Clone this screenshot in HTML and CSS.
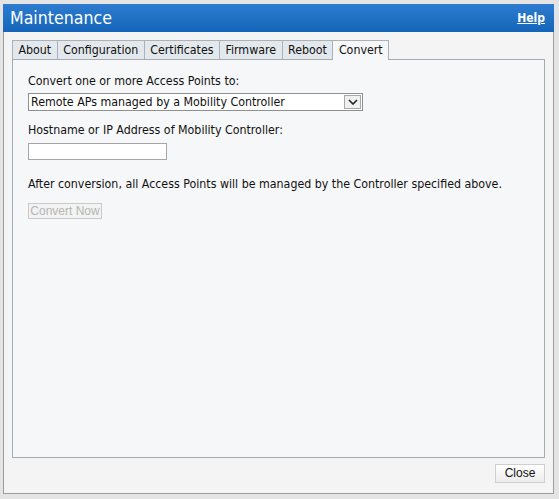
FILE: index.html
```html
<!DOCTYPE html>
<html>
<head>
<meta charset="utf-8">
<link rel="stylesheet" href="styles.css">
</head>
<body>
<div class="dialog">
  <div class="titlebar">
    <span class="title">Maintenance</span>
    <a class="help" href="#">Help</a>
  </div>
  <div class="body">
    <div class="tabs">
      <div class="tab">About</div>
      <div class="tab">Configuration</div>
      <div class="tab">Certificates</div>
      <div class="tab">Firmware</div>
      <div class="tab">Reboot</div>
      <div class="tab active">Convert</div>
    </div>
    <div class="panel">
      <div class="label">Convert one or more Access Points to:</div>
      <div class="select">
        <span class="select-text">Remote APs managed by a Mobility Controller</span>
        <span class="select-arrow">
          <svg width="10" height="6" viewBox="0 0 10 6"><path d="M1 1 L5 5 L9 1" fill="none" stroke="#222" stroke-width="1.6"/></svg>
        </span>
      </div>
      <div class="label gap1">Hostname or IP Address of Mobility Controller:</div>
      <div class="input"></div>
      <div class="label gap2">After conversion, all Access Points will be managed by the Controller specified above.</div>
      <button class="btn-disabled" disabled>Convert Now</button>
    </div>
    <div class="footer">
      <button class="btn-close">Close</button>
    </div>
  </div>
</div>
</body>
</html>
```

FILE: styles.css
```css
html, body {
  margin: 0;
  padding: 0;
}
body {
  background: #e4e4e4;
  width: 559px;
  height: 499px;
  overflow: hidden;
  font-family: "DejaVu Sans Condensed", "DejaVu Sans", sans-serif;
  font-size: 12.3px;
  color: #111;
}
.dialog {
  margin: 4px 0 0 3px;
  width: 551px;
  height: 490px;
  box-sizing: border-box;
  border: 1px solid #9c9c9c;
  border-top: none;
  background: #f4f4f4;
  display: flex;
  flex-direction: column;
}
.titlebar {
  height: 28px;
  margin: 0 -1px;
  background: linear-gradient(#2d7ccf, #1465b9);
  display: flex;
  align-items: center;
  justify-content: space-between;
  padding: 0 9px 0 7px;
}
.title {
  color: #fff;
  font-size: 17.6px;
}
.help {
  color: #fff;
  font-weight: bold;
  font-size: 12px;
  text-decoration: underline;
}
.body {
  flex: 1;
  display: flex;
  flex-direction: column;
  padding: 8px 8px 0 8px;
}
.tabs {
  display: flex;
  height: 19px;
  position: relative;
  z-index: 1;
}
.tab {
  border: 1px solid #a9b2bb;
  border-left: none;
  border-bottom: none;
  background: #e3e8ec;
  padding: 0 5.5px;
  line-height: 18px;
  height: 19px;
  box-sizing: border-box;
}
.tab:first-child {
  border-left: 1px solid #a9b2bb;
}
.tab.active {
  background: #f6f7f8;
  height: 20px;
}
.panel {
  width: 533px;
  height: 399px;
  box-sizing: border-box;
  border: 1px solid #a3abb3;
  background: #f6f7f8;
  padding: 14px 15px;
}
.label {
  line-height: 15px;
  white-space: nowrap;
}
.gap1 { margin-top: 12px; }
.gap2 { margin-top: 17px; }
.select {
  margin-top: 4px;
  width: 335px;
  height: 18px;
  box-sizing: border-box;
  border: 1px solid #8f8f8f;
  background: #fff;
  display: flex;
  align-items: center;
  justify-content: space-between;
}
.select-text {
  padding-left: 2px;
}
.select-arrow {
  width: 17px;
  height: 14px;
  margin-right: 1px;
  box-sizing: border-box;
  border: 1px solid #a8a8a8;
  background: #f0f0f0;
  display: flex;
  align-items: center;
  justify-content: center;
}
.input {
  margin-top: 5px;
  width: 139px;
  height: 17px;
  box-sizing: border-box;
  border: 1px solid #a5a5a5;
  background: #fff;
}
.btn-disabled {
  display: block;
  margin-top: 11px;
  width: 74px;
  height: 16px;
  padding: 0;
  box-sizing: border-box;
  border: 1px solid #c9c9c9;
  background: #f3f3f3;
  color: #b5b5b5;
  font-family: "Liberation Sans", Arial, sans-serif;
  font-size: 12px;
  line-height: 14px;
}
.footer {
  display: flex;
  justify-content: flex-end;
  width: 533px;
  padding-top: 6px;
}
.btn-close {
  width: 50px;
  height: 19px;
  padding: 0;
  box-sizing: border-box;
  border: 1px solid #cfcfcf;
  background: linear-gradient(#ffffff, #ececec);
  color: #111;
  font-family: "Liberation Sans", Arial, sans-serif;
  font-size: 12px;
  line-height: 17px;
}
```
